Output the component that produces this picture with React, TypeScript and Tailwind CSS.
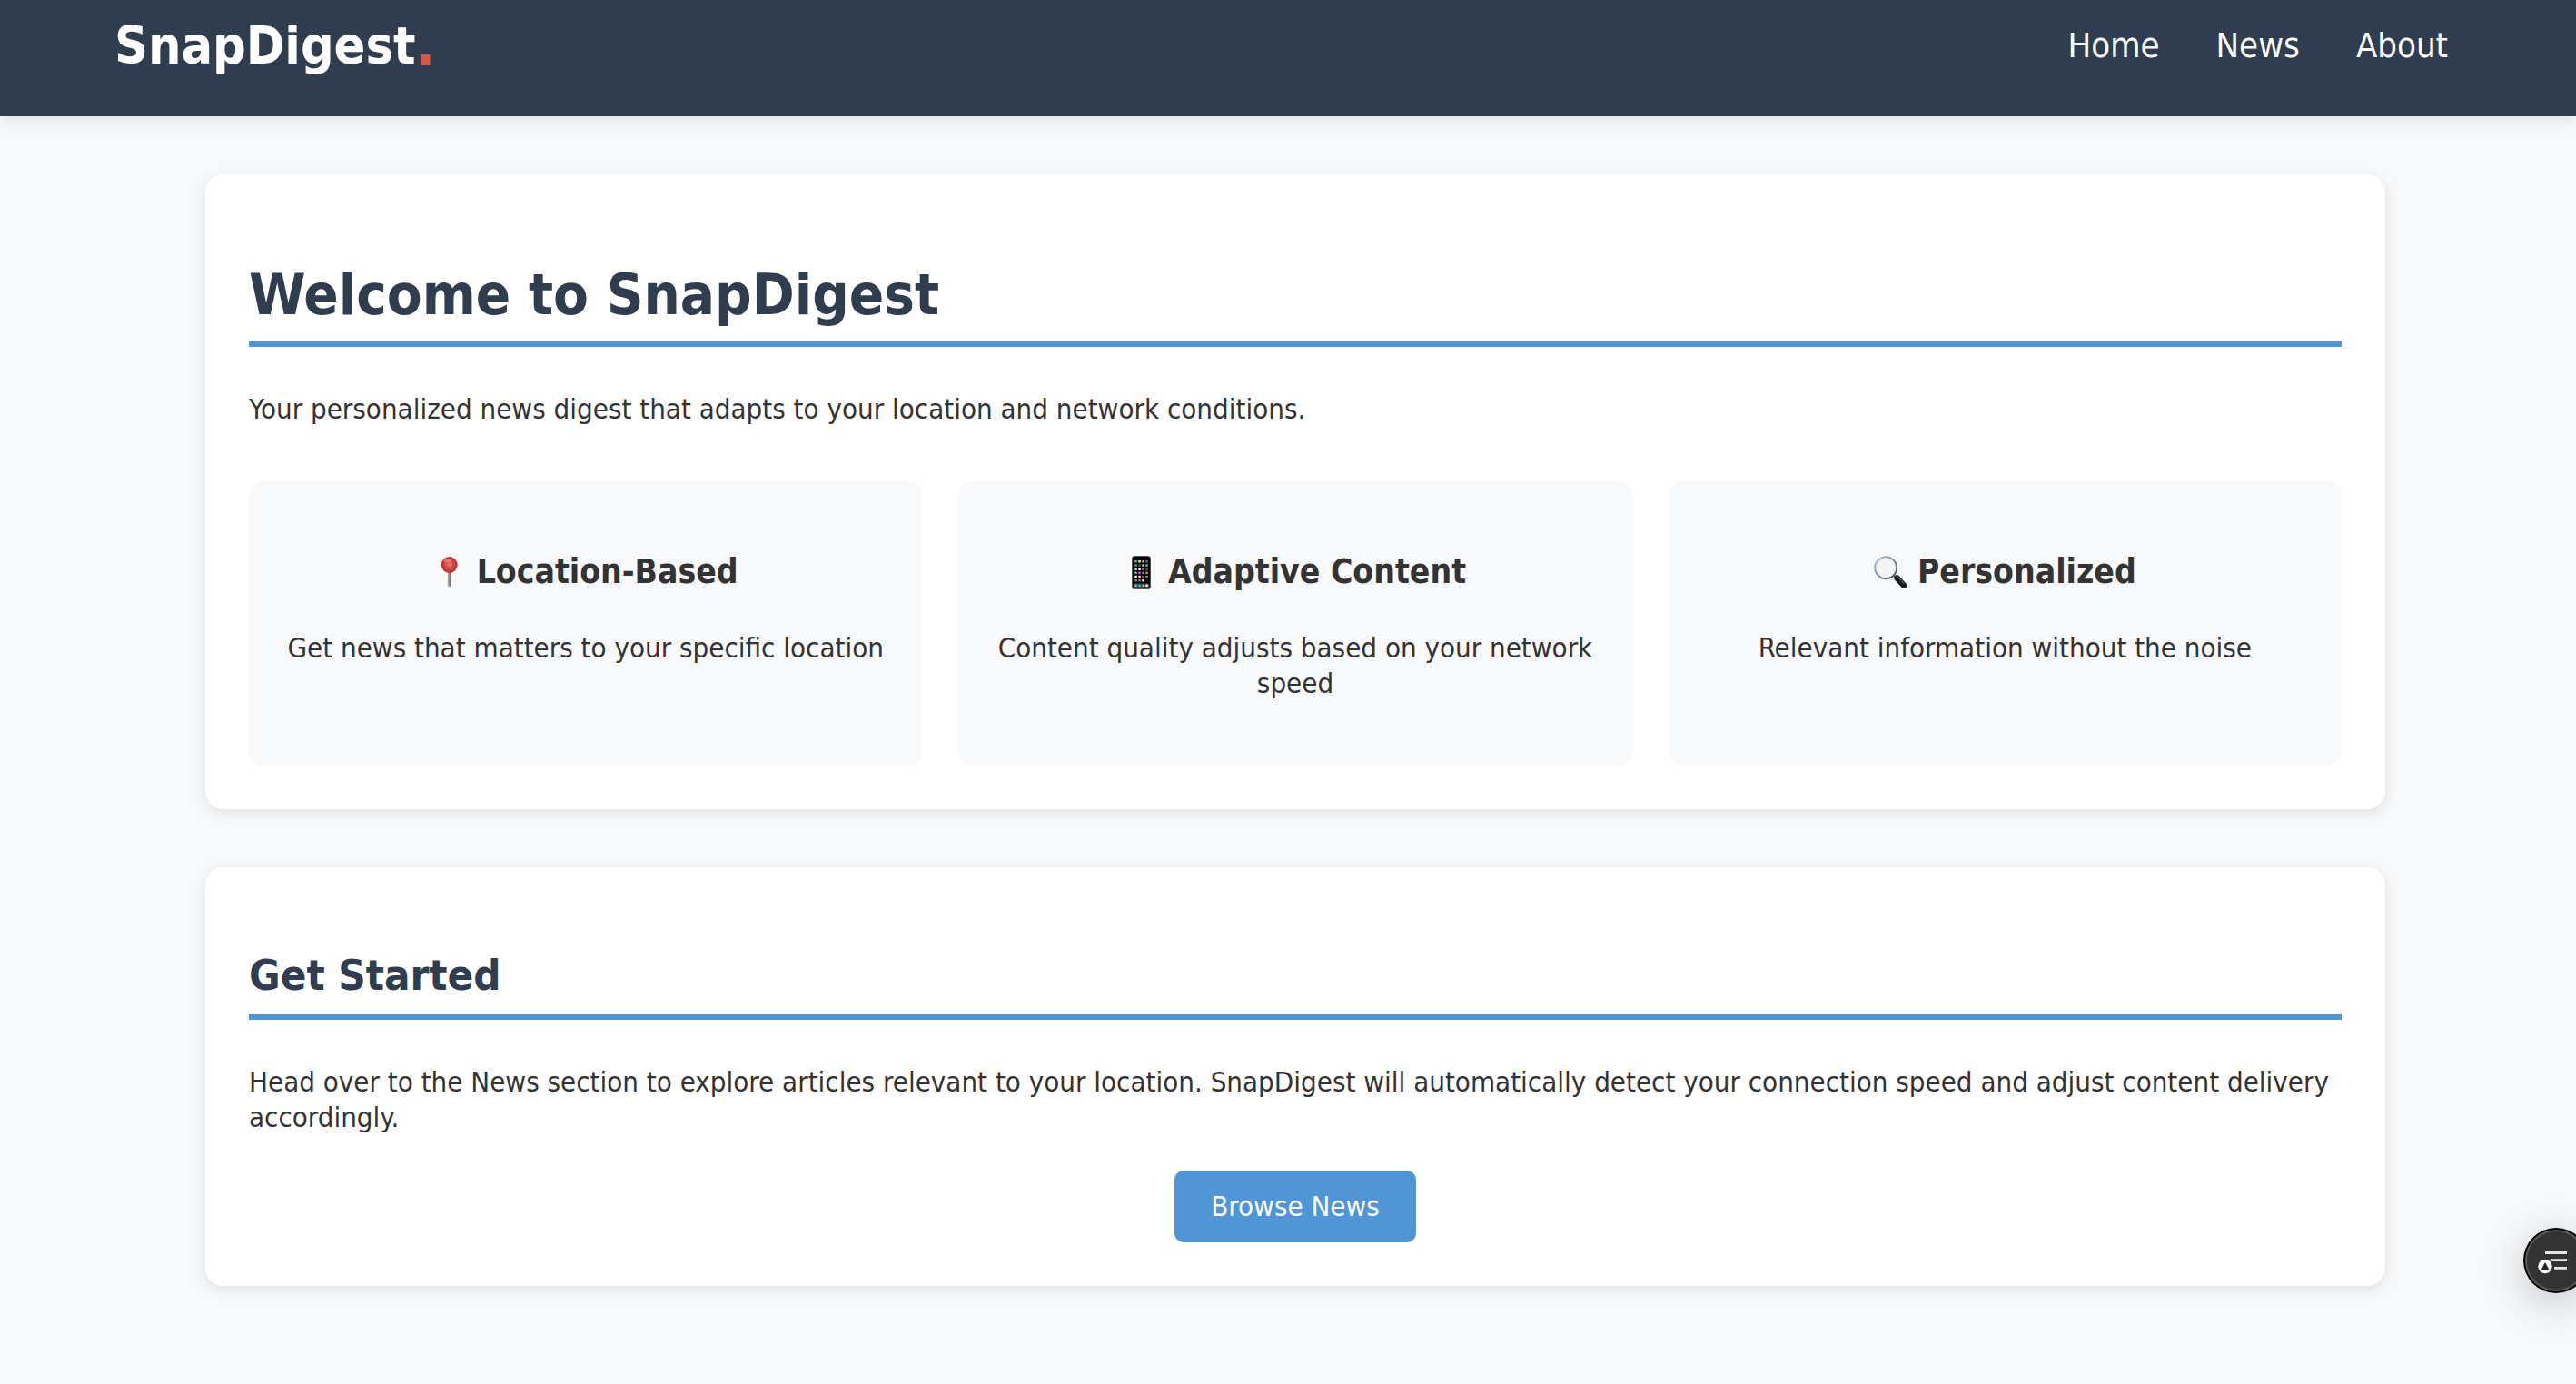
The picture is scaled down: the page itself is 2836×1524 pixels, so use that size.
import type { ReactNode } from 'react';

function PinIcon() {
  return (
    <svg viewBox="0 0 37 37" className="h-[37px] w-[37px]" aria-hidden="true">
      <defs>
        <radialGradient id="pin-ball" cx="0.5" cy="0.5" r="0.55">
          <stop offset="0" stopColor="#e8796b" />
          <stop offset="0.45" stopColor="#d24843" />
          <stop offset="1" stopColor="#b12c30" />
        </radialGradient>
        <linearGradient id="pin-needle" x1="0" x2="1" y1="0" y2="0">
          <stop offset="0" stopColor="#b5b2ad" />
          <stop offset="0.5" stopColor="#8f8b86" />
          <stop offset="1" stopColor="#66625e" />
        </linearGradient>
      </defs>
      <path d="M15.9 17h3.6v15.5l-1 1.7h-1.6l-1-1.7z" fill="url(#pin-needle)" />
      <circle cx="17.7" cy="10" r="9" fill="url(#pin-ball)" />
      <ellipse cx="15.7" cy="5.2" rx="4" ry="2" fill="#ef9d92" opacity="0.6" />
    </svg>
  );
}

const appColors = [
  ['#63d65b', '#f2f2f2', '#d3a4e6', '#777777'],
  ['#3f9be8', '#555555', '#d9c9b0', '#58c4e8'],
  ['#f2d64b', '#f2f2f2', '#e0574a', '#555555'],
  ['#4cc3ea', '#d255c8', '#4aa5e8', '#f08a24'],
  ['#f2f2f2', '#f3e04e', '#666666', '#8a8a8a'],
  ['#3f9be8', '#e0574a', '#f2f2f2', '#111111'],
];
const dockColors = ['#63d65b', '#4aa5e8', '#63d65b', '#f2f2f2'];

function PhoneIcon() {
  return (
    <svg viewBox="0 0 37 37" className="h-[37px] w-[37px]" aria-hidden="true">
      <rect x="8.5" y="0.5" width="20" height="36" rx="2.6" fill="#050505" stroke="#4a4a4a" strokeWidth="0.8" />
      {appColors.map((row, r) =>
        row.map((fill, c) => (
          <rect key={`${r}-${c}`} x={11.3 + c * 4} y={5 + r * 4.2} width="2.5" height="2.5" rx="0.5" fill={fill} />
        )),
      )}
      <rect x="9.6" y="30.6" width="17.8" height="4.6" rx="1" fill="#3c4146" />
      {dockColors.map((fill, c) => (
        <rect key={c} x={11.3 + c * 4} y="31.6" width="2.5" height="2.5" rx="0.5" fill={fill} />
      ))}
    </svg>
  );
}

function MagnifierIcon() {
  return (
    <svg viewBox="0 0 37 37" className="h-[37px] w-[37px]" aria-hidden="true">
      <defs>
        <linearGradient id="lens-rim" x1="0" x2="1" y1="0" y2="1">
          <stop offset="0" stopColor="#a9c4ea" />
          <stop offset="0.45" stopColor="#8d929b" />
          <stop offset="1" stopColor="#3f4348" />
        </linearGradient>
      </defs>
      <path d="M21.5 21.5l4 4" stroke="#5b5f64" strokeWidth="3" />
      <path d="M25.5 24.5l7.6 8.2" stroke="#14181a" strokeWidth="6.4" strokeLinecap="round" />
      <path d="M26.5 23.4l6.6 7" stroke="#5b6668" strokeWidth="1.3" strokeLinecap="round" />
      <circle cx="13.2" cy="13.2" r="12" fill="#f4f5f5" stroke="url(#lens-rim)" strokeWidth="1.9" />
      <circle cx="13.2" cy="13.2" r="10.4" fill="none" stroke="#dcdfe3" strokeWidth="0.8" />
    </svg>
  );
}

function Card({ children }: { children: ReactNode }) {
  return (
    <section className="rounded-[20px] bg-white p-12 shadow-[0_4px_16px_rgba(0,0,0,0.1)]">{children}</section>
  );
}

function Feature({ icon, title, text }: { icon: ReactNode; title: string; text: string }) {
  return (
    <article className="rounded-2xl bg-[#f8f9fa] px-10 pt-[78px] pb-[71px] text-center">
      <h3 className="flex items-center justify-center gap-[11px] text-[37px] leading-[44px] font-bold">
        {icon}
        {title}
      </h3>
      <p className="mt-[42px]">{text}</p>
    </article>
  );
}

export default function App() {
  return (
    <div className="min-h-screen bg-[#f8f9fa] font-['DejaVu_Sans_Condensed','DejaVu_Sans',sans-serif] text-[31px] leading-[39px] text-[#333333]">
      <header className="flex items-center justify-between bg-[#303d4f] pt-4 pr-[141px] pb-11 pl-[126px] text-white shadow-[0_4px_16px_rgba(0,0,0,0.1)]">
        <div className="flex h-[68px] items-center text-[57px] leading-[68px] font-bold">
          <span>SnapDigest</span>
          <span className="text-[64px] text-[#d85846]">.</span>
        </div>
        <nav className="flex gap-[62px] text-[38px] leading-[46px]">
          <a href="#home">Home</a>
          <a href="#news">News</a>
          <a href="#about">About</a>
        </nav>
      </header>

      <div className="pl-4">
        <main className="mx-auto flex max-w-[2400px] flex-col gap-16 py-16">
          <Card>
            <h1 className="mt-[47px] border-b-[6px] border-[#5095d5] pb-[13px] text-[63px] leading-[76px] font-bold text-[#303d4f]">
              Welcome to SnapDigest
            </h1>
            <p className="mt-[49px]">
              Your personalized news digest that adapts to your location and network conditions.
            </p>
            <div className="mt-[60px] grid grid-cols-3 gap-10">
              <Feature
                icon={<PinIcon />}
                title="Location-Based"
                text="Get news that matters to your specific location"
              />
              <Feature
                icon={<PhoneIcon />}
                title="Adaptive Content"
                text="Content quality adjusts based on your network speed"
              />
              <Feature icon={<MagnifierIcon />} title="Personalized" text="Relevant information without the noise" />
            </div>
          </Card>

          <Card>
            <h2 className="mt-[42px] border-b-[6px] border-[#5095d5] pb-[14px] text-[47px] leading-[58px] font-bold text-[#303d4f]">
              Get Started
            </h2>
            <p className="mt-[49px]">
              Head over to the News section to explore articles relevant to your location. SnapDigest will
              automatically detect your connection speed and adjust content delivery accordingly.
            </p>
            <div className="mt-[39px] flex justify-center">
              <button type="button" className="rounded-[10px] bg-[#5095d5] px-10 py-5 text-white">
                Browse News
              </button>
            </div>
          </Card>
        </main>
      </div>

      <button
        type="button"
        aria-label="Open reader summary"
        className="fixed -right-[14px] bottom-[100px] h-[72px] w-[72px] rounded-full shadow-[0_10px_48px_rgba(0,0,0,0.22)]"
      >
        <svg viewBox="0 0 72 72" className="h-full w-full" aria-hidden="true">
          <circle cx="36" cy="36" r="36" fill="#000000" />
          <circle cx="36" cy="36" r="34" fill="#5a5a5a" />
          <circle cx="36" cy="36" r="32" fill="#333333" />
          <path d="M24 26h24v3H24zM30 34.3h18v2.7H30zM34 43h14v2.7H34z" fill="#e6e6e6" />
          <circle cx="24" cy="42.5" r="9.4" fill="#333333" />
          <circle cx="24" cy="42.5" r="7.7" fill="#ffffff" />
          <path d="M24 38.5l4 7.5h-8z" fill="#222222" stroke="#222222" strokeWidth="0.6" />
        </svg>
      </button>
    </div>
  );
}
